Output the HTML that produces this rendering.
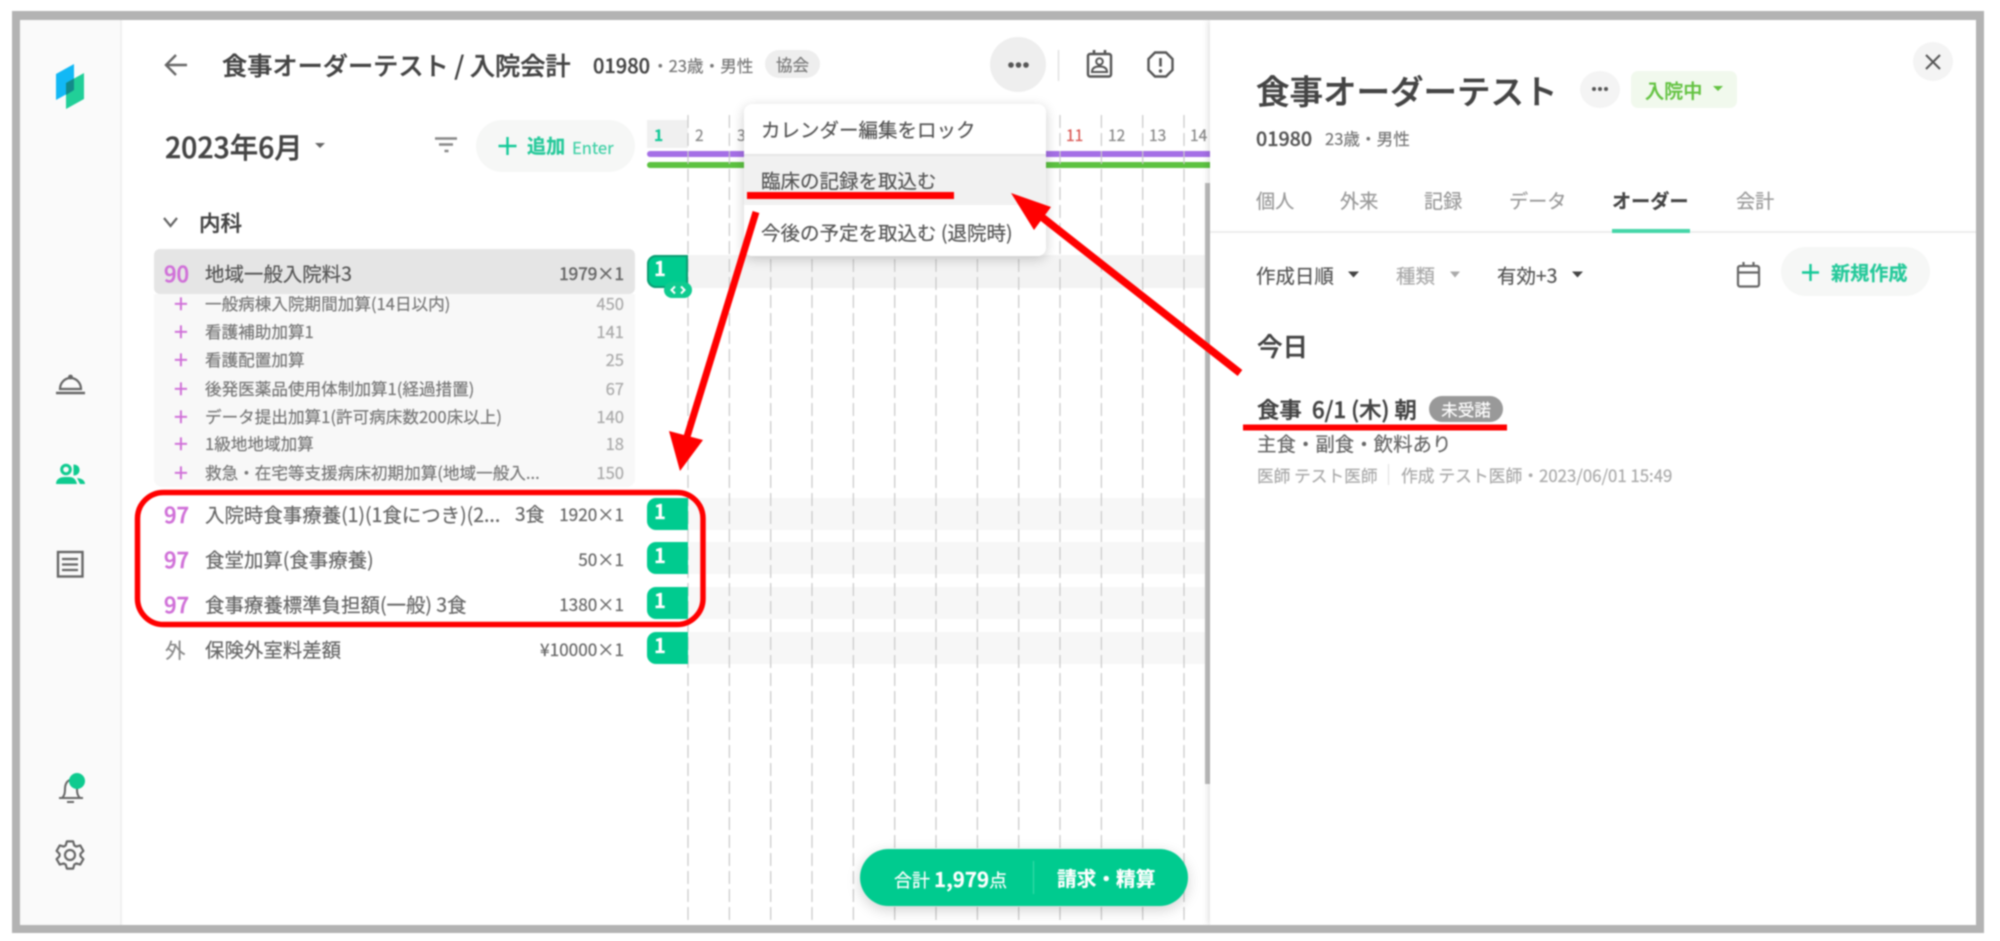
<!DOCTYPE html>
<html lang="ja"><head><meta charset="utf-8"><title>食事オーダーテスト / 入院会計</title>
<style>
html,body{margin:0;padding:0;background:#fff}
#r{position:relative;width:2000px;height:941px;overflow:hidden;background:#fff;filter:blur(.7px);font-family:"Noto Sans CJK JP","Liberation Sans",sans-serif;color:#444;-webkit-text-stroke:.2px}
.a{position:absolute}
.t{position:absolute;white-space:nowrap;line-height:30px;height:30px}
.v{text-align:right;right:1376px}
.s{font-size:16.6px;color:#777}
.n{font-size:19.45px;color:#666}
.c{font-size:22px;color:#d070d8;font-weight:500;left:164px;-webkit-text-stroke:.45px}
.p{left:174px;font-size:25px;color:#d070d8}
.val{font-size:16.6px;color:#aaa}
.bar{position:absolute;left:647px;width:41px;background:#00cb8f;border-radius:9px 0 0 9px;color:#fff;font-weight:700}
.bar span{position:absolute;left:7px;top:-1px;font-size:20px;line-height:28px}
.st{position:absolute;left:687px;width:518px;background:#f7f7f7}
.d{position:absolute;top:120px;font-size:15.5px;line-height:30px;color:#888}
.x{font-size:17.2px;color:#666}
.m{font-size:19.5px;color:#555;left:761px}
</style></head><body><div id="r">

<div class="a" style="left:12px;top:11px;width:1972px;height:922px;background:#b3b3b3;border-radius:3px"></div>
<div class="a" style="left:20px;top:20px;width:1956px;height:905px;background:#fff"></div>
<div class="a" style="left:20px;top:20px;width:100px;height:905px;background:#fafafa;border-right:2px solid #f0f0f0"></div>

<svg class="a" style="left:0;top:0" width="2000" height="941" fill="none">
<polygon points="56,74 74,64 74,90 56,100" fill="#12b8f5"/>
<polygon points="66,83 84,73 84,99 66,109" fill="#0ecb8f" opacity=".92"/>
<polygon points="66,83 74,78.5 74,90 66,95" fill="#128a8a"/>
<path d="M60 389a10.500 11 0 0 1 21 0z" stroke="#666" stroke-width="2.200"/><circle cx="70.500" cy="377" r="2.400" fill="#666"/><path d="M56 393H85" stroke="#666" stroke-width="2.600"/>
<path d="M56 484c0-5 4-7 9-7h4c5 0 7 3 8 7z" fill="#0ecb8f"/><circle cx="66" cy="469.500" r="4.300" stroke="#0ecb8f" stroke-width="3"/><path d="M73.500 464.500c4 0 6 2.500 6 5.500s-2 5.500-6 5.500z" fill="#0ecb8f"/><path d="M77 478l3 .5c3 .8 5 3 5 5.500h-5z" fill="#0ecb8f"/>
<rect x="58" y="552" width="24.500" height="24.500" stroke="#666" stroke-width="2.400"/><path d="M62 559H78M62 564.500H78M62 570H78" stroke="#666" stroke-width="2.200"/>
<path d="M62 798c2-2 3-4 3-9 0-6 3-9 6-9s6 3 6 9c0 5 1 7 3 9zM59 798H83" stroke="#666" stroke-width="2"/><path d="M67 802H74" stroke="#666" stroke-width="2"/><circle cx="77" cy="781" r="8" fill="#0ecb8f"/>
<g transform="translate(70 855)" stroke="#666" stroke-width="2.200" stroke-linejoin="round"><path d="M-4.270-9.590L-3.150-13.640 3.150-13.640 4.270-9.590 6.170-8.490 10.240-9.550 13.390-4.090 10.440-1.100 10.440 1.100 13.390 4.090 10.240 9.550 6.170 8.490 4.270 9.590 3.150 13.640-3.150 13.640-4.270 9.590-6.170 8.490-10.240 9.550-13.390 4.090-10.440 1.100-10.440-1.100-13.390-4.090-10.240-9.550-6.170-8.490z"/><circle r="5"/></g>
<path d="M187 65H167M176 55L166 65 176 75" stroke="#666" stroke-width="2.400"/>
<path d="M435 138.500H457M439 144.500H453M444.500 151H448.500" stroke="#888" stroke-width="2.400"/>
<path d="M164 218L170.500 226 177 218" stroke="#666" stroke-width="2.200"/>
</svg>

<div class="t" style="left:222px;top:50px;font-size:25.2px;font-weight:500;color:#444;-webkit-text-stroke:.4px">食事オーダーテスト / 入院会計</div>
<div class="t" style="left:593px;top:50px;font-size:20px;font-weight:500;color:#444;-webkit-text-stroke:.3px">01980</div>
<div class="t" style="left:652px;top:50px;font-size:16.600px;color:#777">・23歳・男性</div>
<div class="a" style="left:765px;top:50px;width:55px;height:28px;border-radius:14px;background:#eee;text-align:center;font-size:16.600px;line-height:28px;color:#777">協会</div>
<div class="a" style="left:990px;top:37px;width:56px;height:55px;border-radius:50%;background:#eee"></div>
<svg class="a" style="left:1000px;top:50px" width="180" height="32" fill="none">
<circle cx="11" cy="15" r="2.800" fill="#555"/><circle cx="18.500" cy="15" r="2.800" fill="#555"/><circle cx="26" cy="15" r="2.800" fill="#555"/>
<path d="M58.500 0V31" stroke="#e2e2e2" stroke-width="1.500"/>
<rect x="88" y="4" width="23" height="22.500" rx="2" stroke="#555" stroke-width="2.400"/><path d="M94 0V4M105 0V4" stroke="#555" stroke-width="2.600"/><circle cx="99.500" cy="11.500" r="3.300" stroke="#555" stroke-width="2"/><path d="M92 22c0-4 3-5.500 7.500-5.500S107 18 107 22z" stroke="#555" stroke-width="2"/>
<path d="M155 2.500H166L172.500 9V20L166 26.500H155L148.500 20V9z" stroke="#555" stroke-width="2.400"/><path d="M160.500 8V16.500" stroke="#555" stroke-width="2.600"/><circle cx="160.500" cy="21" r="1.700" fill="#555"/>
</svg>

<div class="t" style="left:165px;top:132px;font-size:28.4px;font-weight:500;color:#444;-webkit-text-stroke:.4px">2023年6月</div>
<svg class="a" style="left:314px;top:142px" width="12" height="8"><path d="M1 1H11L6 6z" fill="#666"/></svg>
<div class="a" style="left:476px;top:120px;width:159px;height:52px;border-radius:26px;background:#f6f7f6"></div>
<svg class="a" style="left:497px;top:136px" width="20" height="20"><path d="M10.500 1V19M1.500 10H19.500" stroke="#14c998" stroke-width="2.400"/></svg>
<div class="t" style="left:527px;top:130px;font-size:19.100px;font-weight:700;color:#25c99a">追加</div>
<div class="t" style="left:572px;top:132px;font-size:16.600px;color:#3fd0a6">Enter</div>

<div class="a" style="left:647px;top:120px;width:41px;height:28px;background:#f0f0f0"></div>
<div class="d" style="left:654px;color:#14c998;font-weight:700">1</div>
<div class="d" style="left:695px">2</div><div class="d" style="left:737px">3</div>
<div class="d" style="left:1066px;color:#d9534f">11</div><div class="d" style="left:1108px">12</div><div class="d" style="left:1149px">13</div><div class="d" style="left:1190px">14</div>
<div class="a" style="left:647px;top:151px;width:563px;height:6px;background:#a56fe6;border-radius:3px 0 0 3px"></div>
<div class="a" style="left:647px;top:162px;width:563px;height:6px;background:#5cc241;border-radius:3px 0 0 3px"></div>

<div class="st" style="top:255px;height:33px;background:#f3f3f3"></div>
<div class="st" style="top:498px;height:32px"></div>
<div class="st" style="top:542px;height:32px"></div>
<div class="st" style="top:587px;height:32px"></div>
<div class="st" style="top:632px;height:32px"></div>

<svg class="a" style="left:0;top:0" width="1210" height="925" fill="none" stroke="#c8c8c8" stroke-width="1.200" stroke-dasharray="13 5">
<path d="M688 115V925M729.400 115V925M770.700 115V925M812 115V925M853.400 115V925M894.700 115V925M936 115V925M977.400 115V925M1018.700 115V925M1060 115V925M1101.400 115V925M1142.700 115V925M1184 115V925"/>
</svg>

<div class="t" style="left:199px;top:208px;font-size:21.5px;font-weight:500;color:#444;-webkit-text-stroke:.35px">内科</div>

<div class="a" style="left:154px;top:294px;width:481px;height:193px;background:#f8f8f8;border-radius:0 0 8px 8px"></div>
<div class="a" style="left:154px;top:249px;width:481px;height:45px;background:#e5e5e5;border-radius:6px"></div>
<div class="t c" style="top:258px;">90</div>
<div class="t n" style="left:205px;top:258px;color:#555">地域一般入院料3</div>
<div class="t v x" style="top:258px;-webkit-text-stroke:.45px">1979×1</div>

<div class="t p" style="top:288px">+</div><div class="t s" style="left:205px;top:288px">一般病棟入院期間加算(14日以内)</div><div class="t v val" style="top:288px">450</div>
<div class="t p" style="top:316px">+</div><div class="t s" style="left:205px;top:316px">看護補助加算1</div><div class="t v val" style="top:316px">141</div>
<div class="t p" style="top:344px">+</div><div class="t s" style="left:205px;top:344px">看護配置加算</div><div class="t v val" style="top:344px">25</div>
<div class="t p" style="top:373px">+</div><div class="t s" style="left:205px;top:373px">後発医薬品使用体制加算1(経過措置)</div><div class="t v val" style="top:373px">67</div>
<div class="t p" style="top:401px">+</div><div class="t s" style="left:205px;top:401px">データ提出加算1(許可病床数200床以上)</div><div class="t v val" style="top:401px">140</div>
<div class="t p" style="top:428px">+</div><div class="t s" style="left:205px;top:428px">1級地地域加算</div><div class="t v val" style="top:428px">18</div>
<div class="t p" style="top:457px">+</div><div class="t s" style="left:205px;top:457px">救急・在宅等支援病床初期加算(地域一般入...</div><div class="t v val" style="top:457px">150</div>

<div class="t c" style="top:499px">97</div><div class="t n" style="left:205px;top:499px">入院時食事療養(1)(1食につき)(2...</div><div class="t n" style="left:515px;top:499px;font-size:19px">3食</div><div class="t v x" style="top:499px">1920×1</div>
<div class="t c" style="top:544px">97</div><div class="t n" style="left:205px;top:544px">食堂加算(食事療養)</div><div class="t v x" style="top:544px">50×1</div>
<div class="t c" style="top:589px">97</div><div class="t n" style="left:205px;top:589px">食事療養標準負担額(一般) 3食</div><div class="t v x" style="top:589px">1380×1</div>
<div class="t" style="left:165px;top:634px;font-size:20.500px;color:#888">外</div><div class="t n" style="left:205px;top:634px">保険外室料差額</div><div class="t v x" style="top:634px">¥10000×1</div>

<div class="bar" style="top:255px;height:33px;box-shadow:inset 0 0 0 2px #0a9d72"><span>1</span></div>
<div class="a" style="left:664px;top:282px;width:28px;height:16px;border-radius:8px;background:#0ecb8f"></div>
<svg class="a" style="left:664px;top:282px" width="28" height="16" fill="none" stroke="#fff" stroke-width="2"><path d="M11 4.500L7.500 8 11 11.500M17 4.500L20.500 8 17 11.500"/></svg>
<div class="bar" style="top:498px;height:32px"><span>1</span></div>
<div class="bar" style="top:542px;height:32px"><span>1</span></div>
<div class="bar" style="top:587px;height:32px"><span>1</span></div>
<div class="bar" style="top:632px;height:32px"><span>1</span></div>

<div class="a" style="left:1205px;top:183px;width:5px;height:601px;background:#bdbdbd"></div>

<div class="a" style="left:860px;top:849px;width:328px;height:57px;border-radius:29px;background:#00cb8f;box-shadow:0 4px 14px rgba(0,0,0,.18)"></div>
<div class="t" style="left:894px;top:863px;font-size:18px;color:#fff">合計 <b style="font-size:20.5px;font-weight:700">1,979</b>点</div>
<div class="a" style="left:1033px;top:861px;width:1px;height:33px;background:#3ddcaa"></div>
<div class="t" style="left:1057px;top:863px;font-size:19.700px;font-weight:700;color:#fff">請求・精算</div>

<div class="a" style="left:1210px;top:20px;width:766px;height:905px;background:#fff;box-shadow:-2px 0 6px rgba(0,0,0,.12)"></div>
<div class="a" style="left:12px;top:925px;width:1972px;height:8px;background:#b3b3b3"></div>
<div class="a" style="left:1976px;top:11px;width:8px;height:922px;background:#b3b3b3"></div>
<div class="a" style="left:12px;top:11px;width:1972px;height:9px;background:#b3b3b3"></div>

<div class="t" style="left:1256px;top:75px;font-size:33.500px;font-weight:500;color:#444;-webkit-text-stroke:.5px">食事オーダーテスト</div>
<div class="a" style="left:1580px;top:71px;width:40px;height:37px;border-radius:50%;background:#f4f4f4"></div>
<svg class="a" style="left:1590px;top:84px" width="20" height="10"><circle cx="4" cy="5" r="2" fill="#555"/><circle cx="10" cy="5" r="2" fill="#555"/><circle cx="16" cy="5" r="2" fill="#555"/></svg>
<div class="a" style="left:1631px;top:71px;width:106px;height:37px;border-radius:7px;background:#f1f9ed"></div>
<div class="t" style="left:1645px;top:75px;font-size:19.130px;font-weight:500;color:#62c240;-webkit-text-stroke:.3px">入院中</div>
<svg class="a" style="left:1712px;top:85px" width="12" height="8"><path d="M1 1H11L6 6z" fill="#62c240"/></svg>
<div class="a" style="left:1913px;top:42px;width:40px;height:39px;border-radius:50%;background:#f4f4f4"></div>
<svg class="a" style="left:1924px;top:53px" width="18" height="18"><path d="M2 2L16 16M16 2L2 16" stroke="#555" stroke-width="2"/></svg>
<div class="t" style="left:1256px;top:123px;font-size:19.700px;font-weight:500;color:#555;-webkit-text-stroke:.3px">01980</div>
<div class="t" style="left:1325px;top:123px;font-size:16.600px;color:#777">23歳・男性</div>

<div class="t n" style="left:1256px;top:185px;color:#999;font-size:19.130px">個人</div>
<div class="t n" style="left:1340px;top:185px;color:#999;font-size:19.130px">外来</div>
<div class="t n" style="left:1424px;top:185px;color:#999;font-size:19.130px">記録</div>
<div class="t n" style="left:1509px;top:185px;color:#999;font-size:19.130px">データ</div>
<div class="t n" style="left:1612px;top:185px;color:#444;font-weight:700;font-size:19.130px">オーダー</div>
<div class="t n" style="left:1736px;top:185px;color:#999;font-size:19.130px">会計</div>
<div class="a" style="left:1210px;top:231px;width:766px;height:2px;background:#eee"></div>
<div class="a" style="left:1612px;top:229px;width:78px;height:4px;background:#45d6a8"></div>

<div class="t n" style="left:1256px;top:260px;color:#555">作成日順</div>
<div class="t n" style="left:1396px;top:260px;color:#aaa">種類</div>
<div class="t n" style="left:1497px;top:260px;color:#555">有効+3</div>
<svg class="a" style="left:1340px;top:262px" width="250" height="30"><path d="M8 9.500H19L13.500 15.500z" fill="#444"/><path d="M110 9.500H120L115 15.500z" fill="#aaa"/><path d="M232 9.500H243L237.500 15.500z" fill="#444"/></svg>
<svg class="a" style="left:1735px;top:260px" width="28" height="30" fill="none" stroke="#666" stroke-width="2.200"><rect x="3" y="6" width="21" height="20.500" rx="2"/><path d="M3 12.500H24M8.500 2V6M18.500 2V6"/></svg>
<div class="a" style="left:1781px;top:247px;width:149px;height:49px;border-radius:25px;background:#f6f7f6"></div>
<svg class="a" style="left:1801px;top:263px" width="20" height="20"><path d="M9.500 1V18M1 9.500H18" stroke="#14c998" stroke-width="2.400"/></svg>
<div class="t" style="left:1831px;top:257px;font-size:19.130px;font-weight:700;color:#25c99a">新規作成</div>

<div class="t" style="left:1257px;top:331px;font-size:25.500px;font-weight:500;color:#444;-webkit-text-stroke:.45px">今日</div>
<div class="t" style="left:1257px;top:394px;font-size:22.400px;font-weight:500;color:#444;-webkit-text-stroke:.45px">食事&nbsp; 6/1 (木) 朝</div>
<div class="a" style="left:1429px;top:396px;width:74px;height:26px;border-radius:13px;background:#999;text-align:center;font-size:16.600px;line-height:26px;color:#fff">未受諾</div>
<div class="t n" style="left:1257px;top:428px">主食・副食・飲料あり</div>
<div class="t" style="left:1257px;top:460px;font-size:16.700px;color:#aaa">医師 テスト医師</div>
<div class="a" style="left:1388px;top:464px;width:1px;height:21px;background:#ddd"></div>
<div class="t" style="left:1401px;top:460px;font-size:16.800px;color:#aaa">作成 テスト医師・2023/06/01 15:49</div>

<div class="a" style="left:744px;top:104px;width:302px;height:152px;background:#fff;border-radius:8px;box-shadow:0 3px 12px rgba(0,0,0,.2);overflow:hidden">
<div class="a" style="left:0;top:50px;width:302px;height:2px;background:#e6e6e6"></div>
<div class="a" style="left:0;top:52px;width:302px;height:49px;background:#f1f1f1"></div>
</div>
<div class="t m" style="top:114px">カレンダー編集をロック</div>
<div class="t m" style="top:165px">臨床の記録を取込む</div>
<div class="t m" style="top:217px">今後の予定を取込む (退院時)</div>

<svg class="a" style="left:0;top:0" width="2000" height="941" fill="none">
<rect x="137.500" y="492.500" width="565.500" height="132" rx="26" stroke="#f00" stroke-width="5.500"/>
<path d="M747 195.500H954" stroke="#f00" stroke-width="7"/>
<path d="M1243 427.500H1507" stroke="#f00" stroke-width="6"/>
<path d="M756 212L686 440" stroke="#f00" stroke-width="7"/>
<polygon points="680,471 669,431 703,440" fill="#f00"/>
<path d="M1240 373L1038 214" stroke="#f00" stroke-width="7.500"/>
<polygon points="1011,193 1051,207 1034,230" fill="#f00"/>
</svg>
</div></body></html>
